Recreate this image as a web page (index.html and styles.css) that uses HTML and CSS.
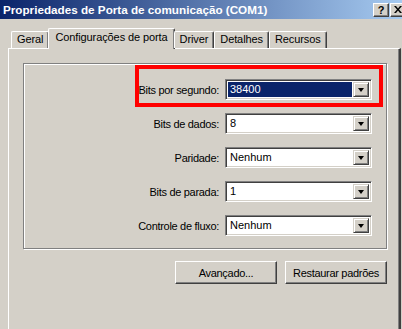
FILE: index.html
```html
<!DOCTYPE html>
<html lang="pt">
<head>
  <meta charset="UTF-8" />
  <title>Propriedades de Porta de comunicação (COM1)</title>
  <link rel="stylesheet" href="styles.css">
</head>
<body>

  <div class="window">
    <div class="titlebar">
      <span class="title">Propriedades de Porta de comunicação (COM1)</span>
      <div class="title-buttons">
        <span class="tb-btn">?</span>
        <span class="tb-btn">
          <svg width="8" height="7" viewBox="0 0 8 7"><path d="M0 0h2l2 2.5L6 0h2L5 3.5 8 7H6L4 4.5 2 7H0l3-3.5z" fill="#000"/></svg>
        </span>
      </div>
    </div>

    <div class="tabs">
      <div class="tab">Geral</div>
      <div class="tab active">Configurações de porta</div>
      <div class="tab">Driver</div>
      <div class="tab">Detalhes</div>
      <div class="tab">Recursos</div>
    </div>

    <div class="panel">
      <div class="group">
        <div class="mark"></div>

        <label>Bits por segundo:</label>
        <div class="combo"><span class="value selected">38400</span><span class="drop"></span></div>

        <label>Bits de dados:</label>
        <div class="combo"><span class="value">8</span><span class="drop"></span></div>

        <label>Paridade:</label>
        <div class="combo"><span class="value">Nenhum</span><span class="drop"></span></div>

        <label>Bits de parada:</label>
        <div class="combo"><span class="value">1</span><span class="drop"></span></div>

        <label>Controle de fluxo:</label>
        <div class="combo"><span class="value">Nenhum</span><span class="drop"></span></div>
      </div>

      <div class="actions">
        <button class="btn">Avançado...</button>
        <button class="btn">Restaurar padrões</button>
      </div>
    </div>
  </div>

</body>
</html>
```

FILE: styles.css
```css
* { margin: 0; padding: 0; box-sizing: border-box; }
body {
  font-family: 'Liberation Sans', Arial, sans-serif;
  font-size: 11px;
  color: #000;
  background-color: #d4d0c8;
  overflow: hidden;
}

.window { width: 402px; height: 329px; overflow: hidden; }

/* Title bar */
.titlebar {
  height: 19px;
  display: flex;
  align-items: center;
  padding-left: 3px;
  background: linear-gradient(to right, #0a246a, #a6caf0);
  color: white;
}
.title { flex: 1; font-weight: bold; font-size: 11.7px; white-space: nowrap; }
.title-buttons { display: flex; gap: 1px; margin-right: -4px; }
.tb-btn {
  width: 16px; height: 14px;
  display: flex; align-items: center; justify-content: center;
  background-color: #d4d0c8;
  color: #000;
  font-weight: bold;
  font-size: 11px;
  border: 1px solid;
  border-color: #fff #404040 #404040 #fff;
  box-shadow: inset -1px -1px #808080;
}

/* Tabs */
.tabs {
  display: flex;
  align-items: flex-end;
  height: 20px;
  margin-top: 9px;
  padding-left: 11px;
  position: relative;
  z-index: 1;
}
.tab {
  height: 17px;
  line-height: 15px;
  padding: 0 5px;
  border: 1px solid;
  border-color: #fff #404040 transparent #fff;
  border-bottom: none;
  border-radius: 2px 2px 0 0;
  box-shadow: inset -1px 0 #808080;
  white-space: nowrap;
  letter-spacing: -0.1px;
}
.tab.active {
  height: 21px;
  line-height: 16px;
  margin: 0 -1px -1px -1px;
  padding: 0 6px;
  background-color: #d4d0c8;
}

/* Page of the property sheet */
.panel {
  height: 281px;
  border-top: 1px solid #fff;
  border-left: 1px solid #fff;
  border-right: 2px solid #404040;
  box-shadow: inset -1px 0 #808080;
  margin-left: 8px;
  width: 393px;
  padding: 14px 12px 0 14px;
}

.group {
  position: relative;
  display: grid;
  grid-template-columns: 1fr 147px;
  column-gap: 6px;
  row-gap: 13px;
  align-items: center;
  padding: 15px 14px 12px 0;
  border: 1px solid #808080;
  box-shadow: inset 1px 1px #fff, 1px 1px #fff;
}
.group label { text-align: right; letter-spacing: -0.3px; }

/* red annotation drawn over the first row */
.mark {
  position: absolute;
  left: 111px; top: 1px;
  width: 248px; height: 42px;
  border: 4px solid #f00;
}

.combo {
  height: 21px;
  display: flex;
  background-color: #fff;
  border: 1px solid;
  border-color: #808080 #fff #fff #808080;
  box-shadow: inset 1px 1px #404040, inset -1px -1px #d4d0c8;
  padding: 2px;
}
.combo .value {
  flex: 1;
  line-height: 15px;
  padding-left: 2px;
}
.combo .value.selected { background-color: #0a246a; color: white; margin-right: 1px; }
.combo .drop {
  width: 16px;
  background-color: #d4d0c8;
  border: 1px solid;
  border-color: #d4d0c8 #404040 #404040 #d4d0c8;
  box-shadow: inset 1px 1px #fff, inset -1px -1px #808080;
  display: flex; align-items: center; justify-content: center;
}
.combo .drop::after {
  content: "";
  border-left: 3.5px solid transparent;
  border-right: 3.5px solid transparent;
  border-top: 4px solid #000;
}

.actions {
  display: flex;
  justify-content: flex-end;
  gap: 8px;
  margin-top: 12px;
}
.btn {
  width: 102px;
  height: 23px;
  font-family: inherit;
  font-size: 11px;
  letter-spacing: -0.3px;
  background-color: #d4d0c8;
  border: 1px solid;
  border-color: #fff #404040 #404040 #fff;
  box-shadow: inset -1px -1px #808080;
}
```
